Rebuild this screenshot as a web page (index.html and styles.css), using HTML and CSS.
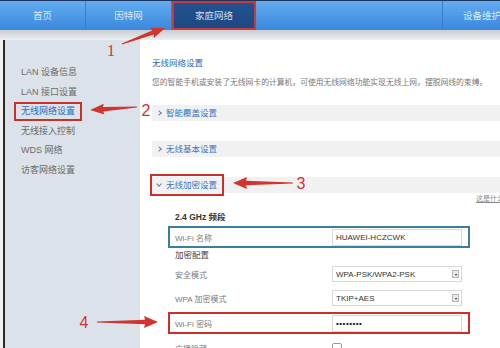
FILE: index.html
```html
<!DOCTYPE html>
<html lang="zh-CN">
<head>
  <meta charset="UTF-8" />
  <title>家庭网络 - 无线网络设置</title>
  <link rel="stylesheet" href="styles.css">
</head>
<body>
  <div class="page">
    <header class="topbar">
      <a class="tab">首页</a>
      <a class="tab">因特网</a>
      <a class="tab active">家庭网络</a>
      <span class="spacer"></span>
      <a class="tab right">设备维护</a>
    </header>
    <div class="shade"></div>

    <div class="layout">
      <aside class="sidebar">
        <ul>
          <li>LAN 设备信息</li>
          <li>LAN 接口设置</li>
          <li><span class="current">无线网络设置</span></li>
          <li>无线接入控制</li>
          <li>WDS 网络</li>
          <li>访客网络设置</li>
        </ul>
      </aside>

      <main class="content">
        <h2>无线网络设置</h2>
        <p class="desc">您的智能手机或安装了无线网卡的计算机，可使用无线网络功能实现无线上网，摆脱网线的束缚。</p>

        <div class="section"><span class="sec-label"><i class="chev"></i>智能覆盖设置</span></div>
        <div class="section"><span class="sec-label"><i class="chev"></i>无线基本设置</span></div>
        <div class="section"><span class="sec-label marked"><i class="chev open"></i>无线加密设置</span></div>

        <div class="help"><a>这是什么</a></div>

        <form class="wifi">
          <div class="band-title">2.4 GHz 频段</div>
          <div class="row boxed blue">
            <label>Wi-Fi 名称</label>
            <span class="field">HUAWEI-HCZCWK</span>
          </div>
          <div class="band-title sub">加密配置</div>
          <div class="row">
            <label>安全模式</label>
            <span class="field select">WPA-PSK/WPA2-PSK<i class="drop"></i></span>
          </div>
          <div class="row second">
            <label>WPA 加密模式</label>
            <span class="field select">TKIP+AES<i class="drop"></i></span>
          </div>
          <div class="row boxed red">
            <label>Wi-Fi 密码</label>
            <span class="field pass">••••••••</span>
          </div>
          <div class="row last">
            <label>广播隐藏</label>
            <span class="check"></span>
          </div>
        </form>
      </main>
    </div>

    <svg class="marks" width="500" height="348" viewBox="0 0 500 348">
      <g fill="#d2352f">
        <polygon transform="translate(122 44) rotate(-20.4)" points="0,-0.6 33,-2.2 32,-5.5 46,0 32,5.5 33,2.2 0,0.6" />
        <polygon transform="translate(137 107) rotate(176.3)" points="0,-0.6 34,-2.2 33,-5.5 47,0 33,5.5 34,2.2 0,0.6" />
        <polygon transform="translate(293 183) rotate(180)" points="0,-0.6 47,-2.2 46,-6 60,0 46,6 47,2.2 0,0.6" />
        <polygon transform="translate(97 322)" points="0,-0.6 48,-2.2 47,-6 61,0 47,6 48,2.2 0,0.6" />
        <text class="num serif" x="111" y="56" font-size="16">1</text>
        <text class="num" x="146" y="116" font-size="16">2</text>
        <text class="num" x="301" y="189" font-size="16">3</text>
        <text class="num" x="84" y="328" font-size="16">4</text>
      </g>
    </svg>
  </div>
</body>
</html>
```

FILE: styles.css
```css
body {
  margin: 0;
  padding: 0;
  background-color: #f2f2f2;
  font-family: "Liberation Sans", "Noto Sans CJK SC", sans-serif;
}

.page {
  position: relative;
  width: 500px;
  height: 348px;
  overflow: hidden;
}

/* top navigation */
.topbar {
  display: flex;
  height: 30px;
  box-sizing: border-box;
  border-top: 1px solid #1d355c;
  background: linear-gradient(#62acf0, #3a88dd);
}

.tab {
  width: 86px;
  box-sizing: border-box;
  color: #d6e8fa;
  font-size: 9.5px;
  line-height: 29px;
  text-align: center;
  border-right: 1px solid #3a7cc6;
}

.tab.active {
  width: 84px;
  background: linear-gradient(#22538f, #1c4883);
  border: 2px solid #c9383a;
  line-height: 25px;
  color: #cfdcec;
}

.spacer {
  flex: 1;
}

.tab.right {
  width: 58px;
  border-right: none;
  border-left: 1px solid #3a7cc6;
  text-align: left;
  padding-left: 20px;
  white-space: nowrap;
  overflow: hidden;
}

.shade {
  height: 10px;
  background: linear-gradient(#c9cdd1, #eceef0);
}

/* body area */
.layout {
  display: grid;
  grid-template-columns: 135px 1fr;
  height: 308px;
  margin-left: 3px;
  border-left: 2px solid #2b2b2b;
}

.sidebar {
  background-color: #dce2e9;
}

.sidebar ul {
  list-style: none;
  margin: 0;
  padding: 23px 0 0 16px;
}

.sidebar li {
  height: 19.5px;
  line-height: 19.5px;
  font-size: 9px;
  color: #6b6b6b;
  white-space: nowrap;
}

.sidebar .current {
  display: inline-block;
  color: #2a6fc0;
  line-height: 15px;
  padding: 0 5px 0 5px;
  margin-left: -5px;
  outline: 2px solid #c9302c;
  outline-offset: 0;
}

.content {
  background-color: #fff;
  padding: 16px 0 0 12px;
  overflow: hidden;
}

.content h2 {
  margin: 0;
  font-size: 8.5px;
  line-height: 14px;
  font-weight: normal;
  color: #2c6cb5;
}

.desc {
  margin: 6px 0 0;
  font-size: 7.8px;
  line-height: 14px;
  color: #787878;
  white-space: nowrap;
}

.section {
  height: 16px;
  margin-top: 20px;
  background-color: #f1f1f1;
  line-height: 16px;
  font-size: 8.5px;
  color: #3a76bf;
}

.desc + .section {
  margin-top: 15px;
}

.sec-label {
  display: inline-block;
  padding: 0 4px 0 5px;
}

.sec-label.marked {
  margin-left: 1px;
  padding-left: 4px;
  outline: 2px solid #c9302c;
  outline-offset: 1px;
}

.chev {
  display: inline-block;
  width: 3px;
  height: 3px;
  margin: 0 5px 1px 0;
  border-right: 1px solid #5a86bb;
  border-bottom: 1px solid #5a86bb;
  transform: rotate(-45deg);
}

.chev.open {
  transform: rotate(45deg);
  margin-bottom: 2px;
}

.help {
  margin: 1px -4px 0 0;
  text-align: right;
  font-size: 7px;
  line-height: 10px;
}

.help a {
  color: #888;
  text-decoration: underline;
}

/* wifi form */
.wifi {
  width: 302px;
  margin: 6px 0 0 16px;
}

.band-title {
  padding-left: 7px;
  font-size: 8.5px;
  line-height: 14px;
  font-weight: bold;
  color: #333;
}

.band-title.sub {
  font-weight: normal;
  color: #444;
}

.row {
  display: grid;
  grid-template-columns: 157px 130px;
  align-items: center;
  height: 22px;
  margin-top: 1px;
  padding-left: 5px;
  box-sizing: border-box;
  border: 2px solid transparent;
}

.row.blue {
  margin-top: 2px;
  border-color: #3f7d9c;
}

.row.second {
  margin-top: 2px;
}

.row.red {
  margin-top: 3px;
  border-color: #c9302c;
}

.row.last {
  margin-top: 3px;
}

.row label {
  font-size: 8px;
  color: #7a7a7a;
}

.field {
  display: flex;
  align-items: center;
  height: 17px;
  box-sizing: border-box;
  padding-left: 3px;
  border: 1px solid #d9d9d9;
  background-color: #fff;
  font-size: 8px;
  color: #333;
}

.field.select {
  height: 16px;
  justify-content: space-between;
  padding-right: 2px;
}

.drop {
  width: 7px;
  height: 8px;
  box-sizing: border-box;
  border: 1px solid #b5b5b5;
  background: #e9e9e9;
  position: relative;
}

.drop::after {
  content: "";
  position: absolute;
  left: 1.5px;
  top: 2.5px;
  border-left: 1.5px solid transparent;
  border-right: 1.5px solid transparent;
  border-top: 2px solid #222;
}

.field.pass {
  font-size: 8px;
  letter-spacing: 0.5px;
  color: #222;
  font-weight: bold;
}

.check {
  width: 8px;
  height: 8px;
  border: 1px solid #999;
  border-radius: 2px;
}

/* annotation overlay */
.marks {
  position: absolute;
  left: 0;
  top: 0;
  pointer-events: none;
}

.num {
  font-family: "Liberation Sans", sans-serif;
  text-anchor: middle;
}

.num.serif {
  font-family: "Liberation Serif", serif;
}
```
